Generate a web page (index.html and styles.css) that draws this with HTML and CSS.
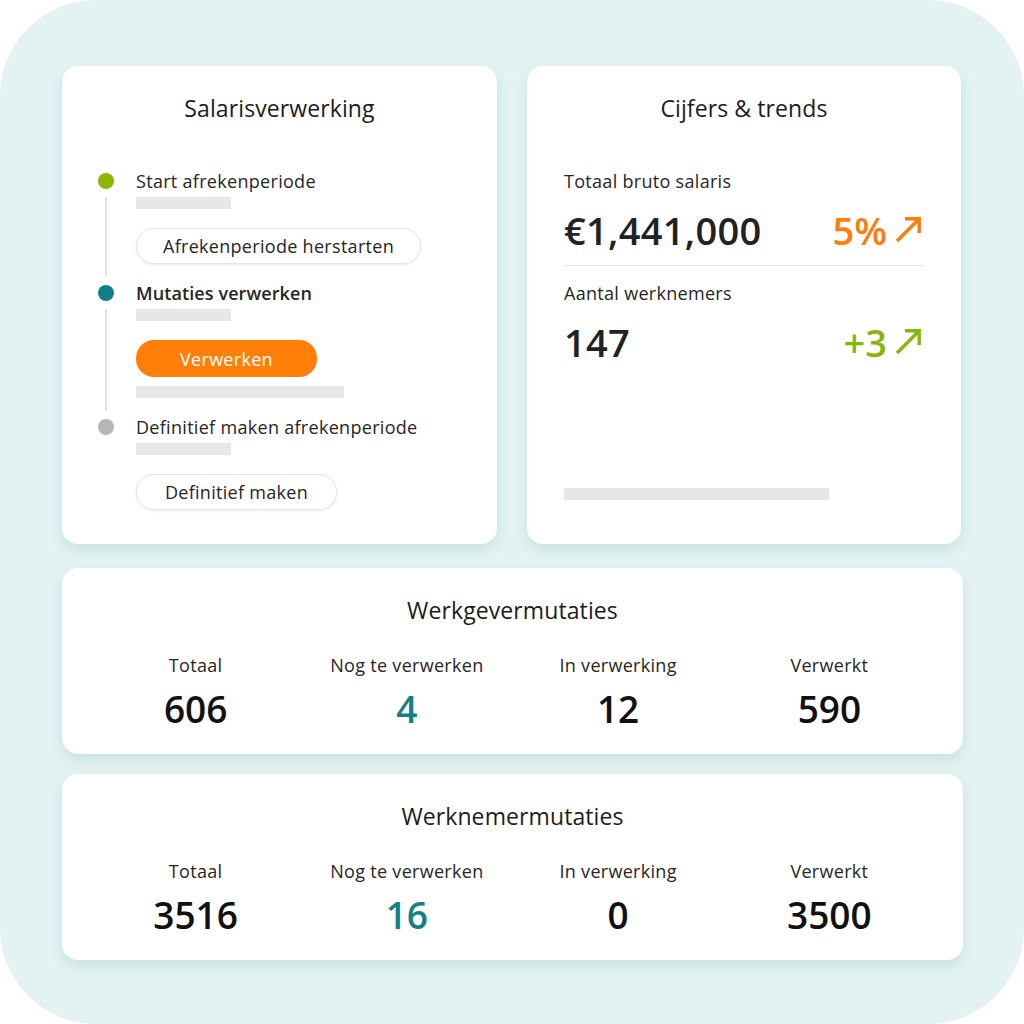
FILE: index.html
```html
<!DOCTYPE html>
<html lang="nl">
<head>
<meta charset="utf-8">
<title>Salaris dashboard</title>
<link rel="stylesheet" href="styles.css">
</head>
<body>
<div class="frame">
  <div class="top-row">
    <section class="card card-process">
      <h2 class="card-title">Salarisverwerking</h2>
      <div class="steps">
        <div class="step">
          <div class="rail"><span class="dot dot-green"></span><span class="line"></span></div>
          <div class="step-body">
            <div class="step-label">Start afrekenperiode</div>
            <div class="bar bar-short"></div>
            <button class="btn btn-outline btn-first">Afrekenperiode herstarten</button>
          </div>
        </div>
        <div class="step">
          <div class="rail"><span class="dot dot-teal"></span><span class="line"></span></div>
          <div class="step-body">
            <div class="step-label step-label-active">Mutaties verwerken</div>
            <div class="bar bar-short"></div>
            <button class="btn btn-primary">Verwerken</button>
            <div class="bar bar-long"></div>
          </div>
        </div>
        <div class="step step-last">
          <div class="rail"><span class="dot dot-grey"></span></div>
          <div class="step-body">
            <div class="step-label">Definitief maken afrekenperiode</div>
            <div class="bar bar-short"></div>
            <button class="btn btn-outline btn-final">Definitief maken</button>
          </div>
        </div>
      </div>
    </section>

    <section class="card card-trends">
      <h2 class="card-title">Cijfers &amp; trends</h2>
      <div class="metric">
        <div class="metric-label">Totaal bruto salaris</div>
        <div class="metric-row">
          <span class="metric-value">€1,441,000</span>
          <span class="trend trend-orange">5%
            <svg class="arrow" viewBox="0 0 28 28" aria-hidden="true"><path d="M2 26 L24 4 M10 3.8 H24.2 V18" fill="none" stroke="currentColor" stroke-width="3.4"/></svg>
          </span>
        </div>
      </div>
      <div class="divider"></div>
      <div class="metric">
        <div class="metric-label">Aantal werknemers</div>
        <div class="metric-row">
          <span class="metric-value">147</span>
          <span class="trend trend-green">+3
            <svg class="arrow" viewBox="0 0 28 28" aria-hidden="true"><path d="M2 26 L24 4 M10 3.8 H24.2 V18" fill="none" stroke="currentColor" stroke-width="3.4"/></svg>
          </span>
        </div>
      </div>
      <div class="bar bar-trend"></div>
    </section>
  </div>

  <section class="card card-stats">
    <h2 class="card-title">Werkgevermutaties</h2>
    <div class="stats">
      <div class="stat"><div class="stat-label">Totaal</div><div class="stat-value">606</div></div>
      <div class="stat"><div class="stat-label">Nog te verwerken</div><div class="stat-value stat-teal">4</div></div>
      <div class="stat"><div class="stat-label">In verwerking</div><div class="stat-value">12</div></div>
      <div class="stat"><div class="stat-label">Verwerkt</div><div class="stat-value">590</div></div>
    </div>
  </section>

  <section class="card card-stats card-stats-last">
    <h2 class="card-title">Werknemermutaties</h2>
    <div class="stats">
      <div class="stat"><div class="stat-label">Totaal</div><div class="stat-value">3516</div></div>
      <div class="stat"><div class="stat-label">Nog te verwerken</div><div class="stat-value stat-teal">16</div></div>
      <div class="stat"><div class="stat-label">In verwerking</div><div class="stat-value">0</div></div>
      <div class="stat"><div class="stat-label">Verwerkt</div><div class="stat-value">3500</div></div>
    </div>
  </section>
</div>
</body>
</html>
```

FILE: styles.css
```css
* { box-sizing: border-box; }

html, body {
  margin: 0;
  padding: 0;
  background: #ffffff;
}

body {
  font-family: "Open Sans", "Noto Sans", sans-serif;
  color: #222222;
}

.frame {
  width: 1024px;
  height: 1024px;
  background: #e3f3f3;
  border-radius: 96px;
  padding: 66px 61px 0 62px;
  display: flex;
  flex-direction: column;
}

.top-row {
  display: grid;
  grid-template-columns: 435px 434px;
  column-gap: 30px;
  height: 478px;
}

.card {
  background: #ffffff;
  border-radius: 16px;
  box-shadow: 0 6px 14px rgba(20, 90, 90, 0.12);
}

.card-title {
  margin: 0;
  font-size: 23px;
  font-weight: 400;
  line-height: 30px;
  letter-spacing: 0.1px;
  text-align: center;
  color: #1c1c1c;
}

/* ---------- Salarisverwerking ---------- */
.card-process {
  padding: 27px 20px 0 36px;
}

.card-process .card-title {
  margin-left: -16px;
}

.steps {
  margin-top: 46px;
}

.step {
  display: grid;
  grid-template-columns: 16px 1fr;
  column-gap: 22px;
  padding-bottom: 17px;
}

.step-last { padding-bottom: 0; }

.rail {
  display: flex;
  flex-direction: column;
  align-items: center;
}

.dot {
  width: 16px;
  height: 16px;
  border-radius: 50%;
  margin-top: 4px;
  flex: none;
}

.dot-green { background: #8cb800; }
.dot-teal { background: #117f86; }
.dot-grey { background: #b6b6b6; }

.line {
  flex: 1;
  width: 2px;
  background: #e4e4e4;
  margin: 8px 0 -13px;
}

.step-body {
  display: flex;
  flex-direction: column;
  align-items: flex-start;
}

.step-label {
  font-size: 18px;
  line-height: 24px;
  letter-spacing: 0.3px;
  color: #262626;
}

.step-label-active {
  font-weight: 600;
  letter-spacing: 0.1px;
}

.bar {
  height: 12px;
  background: #e6e7e9;
}

.bar-short {
  width: 95px;
  margin-top: 4px;
}

.bar-long {
  width: 208px;
  margin-top: 9px;
}

.btn {
  font-family: inherit;
  font-size: 18px;
  letter-spacing: 0.3px;
  height: 36px;
  border-radius: 18px;
  padding: 0 16px;
  margin-top: 19px;
  cursor: pointer;
}

.btn-outline {
  background: #ffffff;
  color: #262626;
  border: 1px solid #e5e5e5;
  box-shadow: 0 1px 3px rgba(0, 0, 0, 0.08);
}

.btn-first { width: 285px; }
.btn-final { width: 201px; }

.btn-primary {
  width: 181px;
  height: 37px;
  background: #ff7f09;
  color: #ffffff;
  border: none;
}

/* ---------- Cijfers & trends ---------- */
.card-trends {
  padding: 27px 37px 0 37px;
  display: flex;
  flex-direction: column;
}

.card-trends .card-title {
  margin-bottom: 46px;
}

.metric-label {
  font-size: 18px;
  line-height: 24px;
  letter-spacing: 0.3px;
  color: #262626;
}

.metric-row {
  display: flex;
  justify-content: space-between;
  align-items: center;
  height: 52px;
  margin-top: 11px;
}

.metric-value {
  font-size: 38px;
  font-weight: 600;
  color: #222222;
  letter-spacing: 0.3px;
}

.trend {
  display: flex;
  align-items: center;
  gap: 8px;
  font-size: 38px;
  font-weight: 600;
}

.trend-orange { color: #ff7d0a; }
.trend-green { color: #87b60b; }

.arrow {
  width: 28px;
  height: 28px;
  margin-top: -2px;
  margin-right: 1px;
}

.divider {
  height: 1px;
  background: #e3e3e3;
  margin: 9px 0 15px;
}

.bar-trend {
  width: 265px;
  margin-top: 120px;
}

/* ---------- Mutaties ---------- */
.card-stats {
  margin-top: 24px;
  height: 186px;
  padding: 27px 28px 0;
}

.card-stats-last {
  margin-top: 20px;
}

.stats {
  display: grid;
  grid-template-columns: repeat(4, 1fr);
  margin-top: 28px;
}

.stat {
  text-align: center;
}

.stat-label {
  font-size: 18px;
  line-height: 24px;
  letter-spacing: 0.3px;
  color: #262626;
}

.stat-value {
  font-size: 37px;
  font-weight: 600;
  line-height: 48px;
  margin-top: 8px;
  color: #111111;
}

.stat-teal { color: #147f86; }
```
